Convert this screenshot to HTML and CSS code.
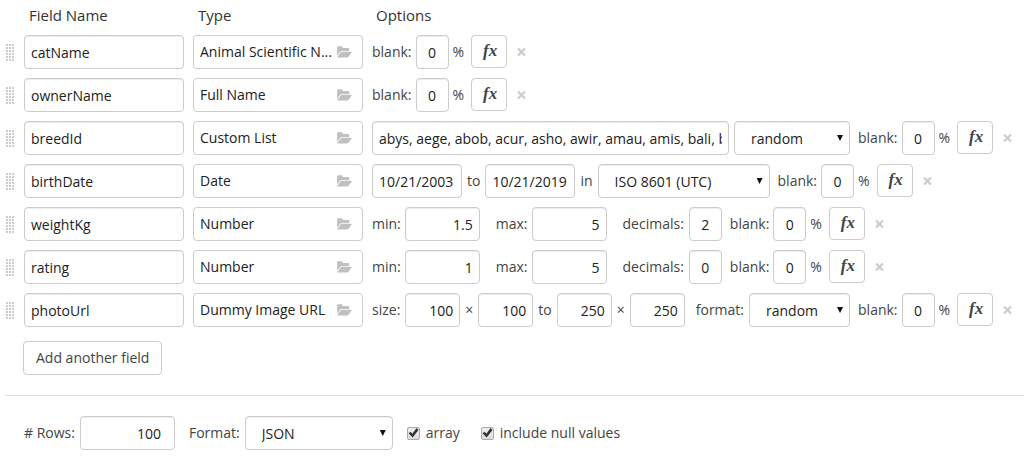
FILE: index.html
```
<!DOCTYPE html>
<html lang="en">
<head>
<meta charset="utf-8">
<title>Fields</title>
<link rel="stylesheet" href="styles.css">
</head>
<body>
<svg class="defs" aria-hidden="true">
  <symbol id="folder" viewBox="0 0 15 12"><path d="M1 .3h3.700q.9 0 .9.900v.7h5.700q.9 0 .9.900v2.200H4.800q-1 0-1.600.8L.1 9.700V1.200Q.1.300 1 .3z"/><path d="M5 5.800h9q1.200 0 .5 1l-3 4q-.6.800-1.600.8H1q-1.100 0-.4-1l3-4Q4.100 5.800 5 5.800z"/></symbol>
  <symbol id="grip" viewBox="0 0 8 17"><path d="M0 0h2v2H0zM3 0h2v2H3zM6 0h2v2H6zM0 3h2v2H0zM3 3h2v2H3zM6 3h2v2H6zM0 6h2v2H0zM3 6h2v2H3zM6 6h2v2H6zM0 9h2v2H0zM3 9h2v2H3zM6 9h2v2H6zM0 12h2v2H0zM3 12h2v2H3zM6 12h2v2H6zM0 15h2v2H0zM3 15h2v2H3zM6 15h2v2H6z"/></symbol>
  <symbol id="cross" viewBox="0 0 9 8"><path d="M1 .5l7 7M8 .5l-7 7" fill="none" stroke="currentColor" stroke-width="2.200"/></symbol>
</svg>
<form class="schema">
  <div class="row head"><span></span><span class="title">Field Name</span><span class="title">Type</span><span class="title">Options</span></div>

  <div class="row">
    <svg class="grip"><use href="#grip"/></svg>
    <input class="box" aria-label="Field name" value="catName">
    <button type="button" class="box type"><span class="type-name">Animal Scientific N...</span><svg class="folder"><use href="#folder"/></svg></button>
    <div class="options">
      <div class="blank"><label for="b1">blank:</label><input class="box digit" id="b1" value="0"><span class="pct">%</span><button type="button" class="box fx">fx</button><button type="button" class="remove" aria-label="Remove"><svg class="cross"><use href="#cross"/></svg></button></div>
    </div>
  </div>

  <div class="row">
    <svg class="grip"><use href="#grip"/></svg>
    <input class="box" aria-label="Field name" value="ownerName">
    <button type="button" class="box type"><span class="type-name">Full Name</span><svg class="folder"><use href="#folder"/></svg></button>
    <div class="options">
      <div class="blank"><label for="b2">blank:</label><input class="box digit" id="b2" value="0"><span class="pct">%</span><button type="button" class="box fx">fx</button><button type="button" class="remove" aria-label="Remove"><svg class="cross"><use href="#cross"/></svg></button></div>
    </div>
  </div>

  <div class="row">
    <svg class="grip"><use href="#grip"/></svg>
    <input class="box" aria-label="Field name" value="breedId">
    <button type="button" class="box type"><span class="type-name">Custom List</span><svg class="folder"><use href="#folder"/></svg></button>
    <div class="options">
      <div class="group"><input class="box list" aria-label="List values" value="abys, aege, abob, acur, asho, awir, amau, amis, bali, beng, birm, bomb"><span class="pick pick-order"><select class="box" aria-label="Order"><option>random</option></select></span></div>
      <div class="blank"><label for="b3">blank:</label><input class="box digit" id="b3" value="0"><span class="pct">%</span><button type="button" class="box fx">fx</button><button type="button" class="remove" aria-label="Remove"><svg class="cross"><use href="#cross"/></svg></button></div>
    </div>
  </div>

  <div class="row">
    <svg class="grip"><use href="#grip"/></svg>
    <input class="box" aria-label="Field name" value="birthDate">
    <button type="button" class="box type"><span class="type-name">Date</span><svg class="folder"><use href="#folder"/></svg></button>
    <div class="options">
      <div class="group"><input class="box date" aria-label="From" value="10/21/2003"><label for="to4">to</label><input class="box date" id="to4" value="10/21/2019"><label for="in4">in</label><span class="pick pick-date"><select class="box" id="in4"><option>ISO 8601 (UTC)</option></select></span></div>
      <div class="blank"><label for="b4">blank:</label><input class="box digit" id="b4" value="0"><span class="pct">%</span><button type="button" class="box fx">fx</button><button type="button" class="remove" aria-label="Remove"><svg class="cross"><use href="#cross"/></svg></button></div>
    </div>
  </div>

  <div class="row">
    <svg class="grip"><use href="#grip"/></svg>
    <input class="box" aria-label="Field name" value="weightKg">
    <button type="button" class="box type"><span class="type-name">Number</span><svg class="folder"><use href="#folder"/></svg></button>
    <div class="options">
      <div class="numbers">
        <div class="group"><label for="min5">min:</label><input class="box number" id="min5" value="1.5"></div>
        <div class="group"><label for="max5">max:</label><input class="box number" id="max5" value="5"></div>
        <div class="group"><label for="dec5">decimals:</label><input class="box digit" id="dec5" value="2"></div>
      </div>
      <div class="blank"><label for="b5">blank:</label><input class="box digit" id="b5" value="0"><span class="pct">%</span><button type="button" class="box fx">fx</button><button type="button" class="remove" aria-label="Remove"><svg class="cross"><use href="#cross"/></svg></button></div>
    </div>
  </div>

  <div class="row">
    <svg class="grip"><use href="#grip"/></svg>
    <input class="box" aria-label="Field name" value="rating">
    <button type="button" class="box type"><span class="type-name">Number</span><svg class="folder"><use href="#folder"/></svg></button>
    <div class="options">
      <div class="numbers">
        <div class="group"><label for="min6">min:</label><input class="box number" id="min6" value="1"></div>
        <div class="group"><label for="max6">max:</label><input class="box number" id="max6" value="5"></div>
        <div class="group"><label for="dec6">decimals:</label><input class="box digit" id="dec6" value="0"></div>
      </div>
      <div class="blank"><label for="b6">blank:</label><input class="box digit" id="b6" value="0"><span class="pct">%</span><button type="button" class="box fx">fx</button><button type="button" class="remove" aria-label="Remove"><svg class="cross"><use href="#cross"/></svg></button></div>
    </div>
  </div>

  <div class="row">
    <svg class="grip"><use href="#grip"/></svg>
    <input class="box" aria-label="Field name" value="photoUrl">
    <button type="button" class="box type"><span class="type-name">Dummy Image URL</span><svg class="folder"><use href="#folder"/></svg></button>
    <div class="options">
      <div class="image-options">
        <div class="group"><label for="w7">size:</label><input class="box size" id="w7" value="100"><span>×</span><input class="box size" aria-label="Minimum height" value="100"><span>to</span><input class="box size" aria-label="Maximum width" value="250"><span>×</span><input class="box size" aria-label="Maximum height" value="250"></div>
        <div class="group"><label for="f7">format:</label><span class="pick pick-image"><select class="box" id="f7"><option>random</option></select></span></div>
      </div>
      <div class="blank"><label for="b7">blank:</label><input class="box digit" id="b7" value="0"><span class="pct">%</span><button type="button" class="box fx">fx</button><button type="button" class="remove" aria-label="Remove"><svg class="cross"><use href="#cross"/></svg></button></div>
    </div>
  </div>

  <button type="button" class="box add">Add another field</button>
  <hr class="rule">
  <div class="output">
    <div class="group"><label for="rows"># Rows:</label><input class="box rows" id="rows" value="100"></div>
    <div class="group"><label for="format">Format:</label><span class="pick pick-format"><select class="box" id="format"><option>JSON</option></select></span></div>
    <div class="checks">
      <label class="check"><input type="checkbox" class="tick" checked>array</label>
      <label class="check"><input type="checkbox" class="tick" checked>include null values</label>
    </div>
  </div>
</form>
</body>
</html>
```
FILE: styles.css
```
* { box-sizing: border-box; }
body {
  margin: 0;
  background: #fff;
  color: #444;
  font: 14px/20px "Open Sans", sans-serif;
}
.defs { position: absolute; width: 0; height: 0; }
.schema { display: flex; flex-direction: column; gap: 9px; padding: 5px 0 10px 6px; }
.row {
  display: grid;
  grid-template-columns: 9px 160px 170px 1fr;
  column-gap: 9px;
  align-items: center;
}
.head { padding-bottom: 1px; color: #333; font-size: 15px; }
.title { padding-left: 5px; }
.title:last-child { padding-left: 4px; }
.grip { width: 8px; height: 17px; fill: #ccc; }
.box {
  width: 100%;
  height: 34px;
  margin: 0;
  padding: 1px 6px 0;
  border: 1px solid #ccc;
  border-radius: 4px;
  background: #fff;
  color: #222;
  font: 14px/20px "Open Sans", sans-serif;
}
input.box { padding-bottom: 1px; }
input.box, select.box { box-shadow: inset 0 1px 1px rgba(0, 0, 0, .075); }
.type { display: flex; align-items: center; gap: 2px; padding: 0 10px 0 6px; text-align: left; }
.type-name { flex: 1; overflow: hidden; white-space: nowrap; text-overflow: ellipsis; }
.folder { flex: none; width: 15px; height: 12px; fill: #c0c0c0; }
.options { display: flex; align-items: center; gap: 8px; white-space: nowrap; }
.group { display: flex; align-items: center; gap: 5px; }
.numbers { display: flex; gap: 16px; }
.numbers .group { gap: 4px; }
.numbers .group:last-child { gap: 5px; }
.image-options { display: flex; gap: 11px; }
.blank { display: flex; align-items: center; gap: 4px; }
.box.digit { width: 33px; padding-left: 0; padding-right: 0; text-align: center; }
.box.number { width: 75px; text-align: right; }
.box.size { width: 55px; text-align: right; }
.box.date { width: 90px; }
.box.list { width: 357px; }
.pct { padding-right: 3px; }
.box.fx {
  align-self: flex-start;
  width: 36px;
  height: 33px;
  padding: 0 0 1px 2px;
  color: #444;
  font: italic bold 17px/20px "Liberation Serif", serif;
}
.remove { display: flex; margin: 0 0 0 6px; padding: 0; border: 0; background: none; color: #ccc; }
.cross { width: 9px; height: 8px; }
.pick { position: relative; }
.pick::after {
  content: "";
  position: absolute;
  right: 7px;
  top: 14px;
  width: 6px;
  height: 6px;
  background: #111;
  clip-path: polygon(0 0, 100% 0, 50% 100%);
  pointer-events: none;
}
.pick select { appearance: none; padding-left: 16px; }
.pick-order { width: 116px; }
.pick-date { width: 172px; }
.pick-image { width: 101px; }
.pick-format { width: 148px; }
.add { align-self: flex-start; width: auto; margin: 5px 0 0 17px; padding: 0 12px; color: #444; }
.rule { width: 100%; height: 1px; margin: 11px 0; border: 0; background: #ddd; }
.output { display: flex; align-items: center; gap: 14px; padding-left: 18px; }
.box.rows { width: 95px; padding: 0 13px; text-align: right; }
.checks { display: flex; gap: 21px; }
.check { display: flex; align-items: center; gap: 6px; }
.tick {
  appearance: none;
  position: relative;
  width: 13px;
  height: 13px;
  margin: 0;
  border: 1px solid #aaa;
  border-radius: 2px;
  background: linear-gradient(#eee, #ddd);
}
.tick:checked::after {
  content: "";
  position: absolute;
  inset: 0;
  background: #333;
  clip-path: polygon(8% 52%, 25% 38%, 42% 56%, 80% 5%, 98% 22%, 44% 92%);
}
```
